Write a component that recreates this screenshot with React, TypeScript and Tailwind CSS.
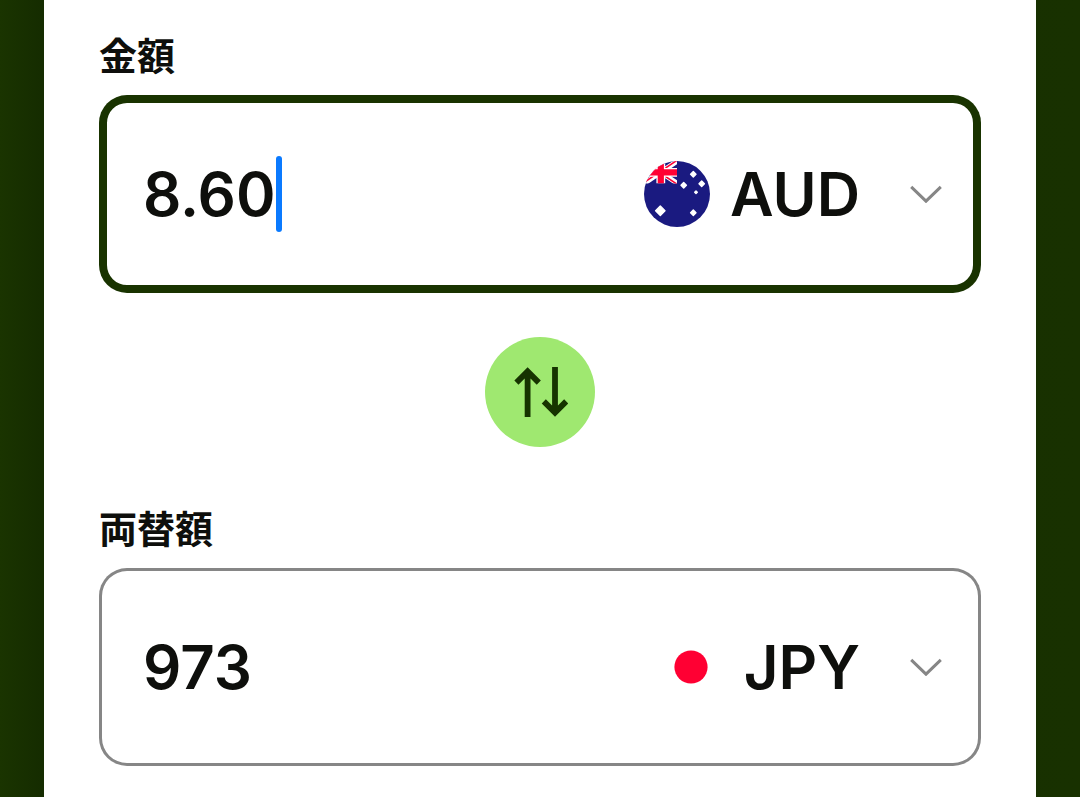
import { useState } from 'react';
import clsx from 'clsx';

type Currency = 'AUD' | 'JPY';

const currencies: Currency[] = ['AUD', 'JPY'];

function Flag({ currency }: { currency: Currency }) {
  if (currency === 'JPY') {
    return (
      <svg className="size-[66px] shrink-0" viewBox="0 0 66 66" aria-hidden="true">
        <circle cx="33" cy="33" r="33" fill="#fff" />
        <circle cx="33" cy="33" r="16.6" fill="#ff0033" />
      </svg>
    );
  }

  return (
    <svg className="size-[66px] shrink-0" viewBox="0 0 66 66" aria-hidden="true">
      <defs>
        <clipPath id="aud-round">
          <circle cx="33" cy="33" r="33" />
        </clipPath>
        <clipPath id="aud-canton">
          <rect width="33" height="22.5" />
        </clipPath>
      </defs>
      <g clipPath="url(#aud-round)">
        <rect width="66" height="66" fill="#1a1a80" />
        <g clipPath="url(#aud-canton)">
          <path d="M0 0L33.5 22.5M33.5 0L0 22.5" stroke="#fff" strokeWidth="5" />
          <path d="M0 1L33.5 23.5M33.5 -1L0 21.5" stroke="#ff0033" strokeWidth="1.6" />
          <path d="M16.8 0V22.5M0 11.4H33.5" stroke="#fff" strokeWidth="8.8" />
          <path d="M16.8 0V22.5M0 11.4H33.5" stroke="#ff0033" strokeWidth="6.2" />
        </g>
        <g fill="#fff" stroke="#fff" strokeWidth="1.4" strokeLinejoin="round">
          <path d="M16.3 45L21 49.7L16.3 54.4L11.6 49.7Z" />
          <path d="M49.3 10.6L52 13.3L49.3 16L46.6 13.3Z" />
          <path d="M39.7 21.6L42.4 24.3L39.7 27L37 24.3Z" />
          <path d="M57.7 20.1L60.4 22.8L57.7 25.5L55 22.8Z" />
          <path d="M49.3 49L52 51.7L49.3 54.4L46.6 51.7Z" />
          <path d="M52 30L53.3 31.3L52 32.6L50.7 31.3Z" />
        </g>
      </g>
    </svg>
  );
}

interface MoneyFieldProps {
  id: string;
  label: string;
  value: string;
  currency: Currency;
  active?: boolean;
  onValueChange: (value: string) => void;
  onCurrencyChange: (currency: Currency) => void;
}

function MoneyField({ id, label, value, currency, active, onValueChange, onCurrencyChange }: MoneyFieldProps) {
  return (
    <div className="flex flex-col gap-[15px]">
      <label htmlFor={id} className="text-[38px] leading-[48px] font-bold">
        {label}
      </label>
      <div
        className={clsx(
          'flex h-[198px] items-center justify-between rounded-[28px] pr-[39px] pl-11 ring-inset',
          active ? 'ring-8 ring-[#193300]' : 'ring-3 ring-[#868686]'
        )}
      >
        <div className="flex min-w-0 items-center">
          <input
            id={id}
            type="text"
            inputMode="decimal"
            value={value}
            onChange={(e) => onValueChange(e.target.value)}
            className="field-sizing-content h-20 min-w-0 bg-transparent text-6xl font-semibold caret-transparent outline-none"
          />
          {active && <span className="h-[76px] w-[6px] shrink-0 rounded-full bg-[#0a7aff]" />}
        </div>
        <div className="flex shrink-0 items-center">
          <Flag currency={currency} />
          <select
            aria-label={`${label}の通貨`}
            value={currency}
            onChange={(e) => onCurrencyChange(e.target.value as Currency)}
            className="field-sizing-content ml-5 h-20 appearance-none bg-transparent text-6xl font-semibold outline-none"
          >
            {currencies.map((c) => (
              <option key={c} value={c}>
                {c}
              </option>
            ))}
          </select>
          <svg
            className="pointer-events-none ml-[50px] h-[18px] w-8"
            viewBox="0 0 32 18"
            fill="none"
            stroke="#868686"
            strokeWidth="3"
            aria-hidden="true"
          >
            <path d="M1.2 1.8L16 16.2L30.8 1.8" />
          </svg>
        </div>
      </div>
    </div>
  );
}

export default function App() {
  const [amount, setAmount] = useState('8.60');
  const [converted, setConverted] = useState('973');
  const [from, setFrom] = useState<Currency>('AUD');
  const [to, setTo] = useState<Currency>('JPY');

  const swap = () => {
    setFrom(to);
    setTo(from);
    setAmount(converted);
    setConverted(amount);
  };

  return (
    <div className="min-h-screen bg-linear-to-r from-[#1a3400] via-[#152c00] via-4% to-[#183100] px-11 font-['Inter','Noto_Sans_CJK_JP',sans-serif] text-[#0e0f0c]">
      <main className="flex min-h-screen flex-col bg-white px-[55px] pt-8 pb-[31px]">
        <MoneyField
          id="amount"
          label="金額"
          value={amount}
          currency={from}
          active
          onValueChange={setAmount}
          onCurrencyChange={setFrom}
        />
        <button
          type="button"
          onClick={swap}
          aria-label="通貨を入れ替える"
          className="mt-11 mb-[58px] flex size-[110px] items-center justify-center self-center rounded-full bg-[#9fe870]"
        >
          <svg className="size-14" viewBox="0 0 56 56" fill="none" stroke="#163300" strokeWidth="5.8" aria-hidden="true">
            <path d="M15.6 53V7.6M4.4 18.6L15.6 7.4L26.8 18.6" />
            <path d="M43 3V48.4M31.8 37.4L43 48.6L54.2 37.4" />
          </svg>
        </button>
        <MoneyField
          id="converted"
          label="両替額"
          value={converted}
          currency={to}
          onValueChange={setConverted}
          onCurrencyChange={setTo}
        />
      </main>
    </div>
  );
}
